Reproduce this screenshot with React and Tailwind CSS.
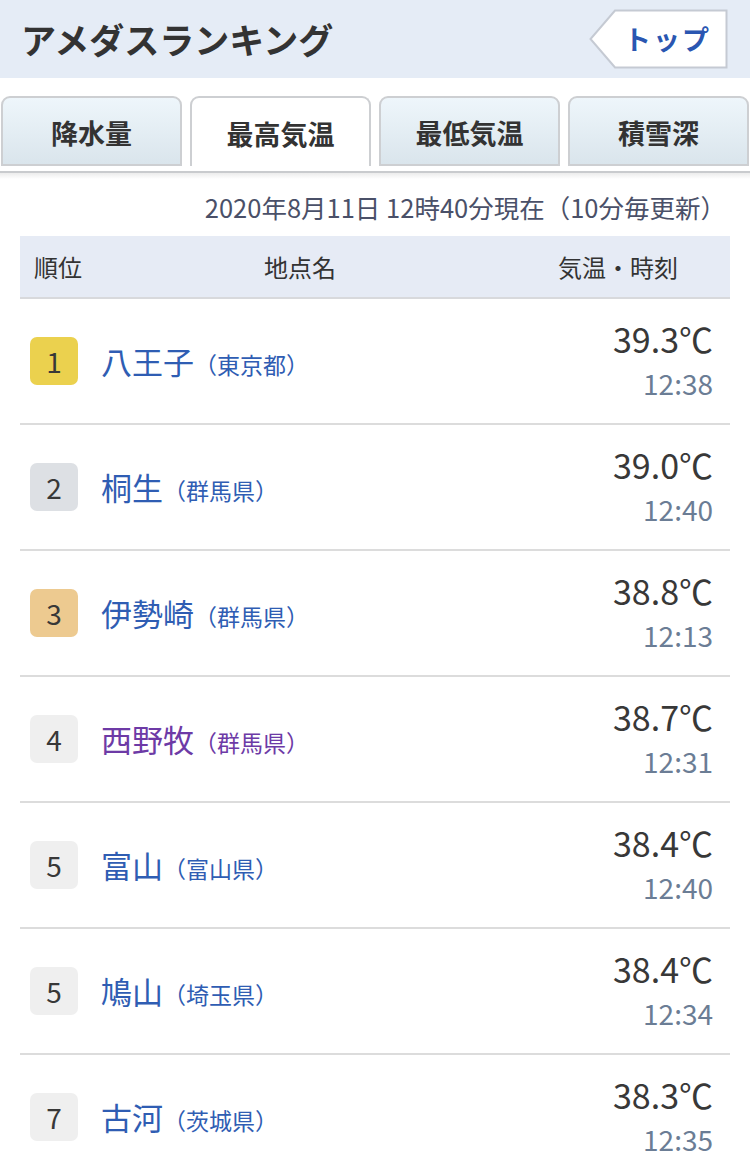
import React from 'react'

const FONT = "font-['Noto_Sans_CJK_JP','Noto_Sans',sans-serif]"

const TABS = [
  { label: '降水量' },
  { label: '最高気温', active: true },
  { label: '最低気温' },
  { label: '積雪深' },
]

const RANKING = [
  { rank: 1, name: '八王子', pref: '東京都', temp: '39.3', time: '12:38' },
  { rank: 2, name: '桐生', pref: '群馬県', temp: '39.0', time: '12:40' },
  { rank: 3, name: '伊勢崎', pref: '群馬県', temp: '38.8', time: '12:13' },
  { rank: 4, name: '西野牧', pref: '群馬県', temp: '38.7', time: '12:31', visited: true },
  { rank: 5, name: '富山', pref: '富山県', temp: '38.4', time: '12:40' },
  { rank: 5, name: '鳩山', pref: '埼玉県', temp: '38.4', time: '12:34' },
  { rank: 7, name: '古河', pref: '茨城県', temp: '38.3', time: '12:35' },
]

const BADGE = {
  1: 'bg-[#ebd14e]',
  2: 'bg-[#dde0e4]',
  3: 'bg-[#edca90]',
}

function TopButton() {
  return (
    <a className="relative flex h-[60px] w-[140px] items-center justify-end pr-[18px]">
      <svg className="absolute inset-0" width="140" height="60" viewBox="0 0 140 60">
        <polygon
          points="26,1.5 137.5,1.5 137.5,58.5 26,58.5 1.5,30"
          fill="#ffffff"
          stroke="#c5cad3"
          strokeWidth="2"
        />
      </svg>
      <span className="relative text-[27px] font-bold tracking-[2px] text-[#2a56b1]">トップ</span>
    </a>
  )
}

function Tab({ label, active }) {
  return (
    <div
      className={`flex h-[70px] items-center justify-center rounded-t-[9px] border-2 border-[#cdcfd2] pt-[4px] text-[27px] font-bold text-[#333] ${
        active ? 'border-b-0 bg-white' : 'bg-gradient-to-b from-[#eef6fb] to-[#dae5ec]'
      }`}
    >
      {label}
    </div>
  )
}

function Row({ item }) {
  const color = item.visited ? 'text-[#6d3aa6]' : 'text-[#2f5db3]'
  return (
    <li className="flex h-[126px] items-center border-b-2 border-[#dcdcdc] pl-[10px] pr-[17px]">
      <span
        className={`flex h-[48px] w-[48px] items-center justify-center rounded-[7px] text-[28px] text-[#383838] ${
          BADGE[item.rank] ?? 'bg-[#efefef]'
        }`}
      >
        {item.rank}
      </span>
      <p className={`ml-[23px] flex-1 ${color}`}>
        <span className="text-[31px]">{item.name}</span>
        <span className="text-[23px]">（{item.pref}）</span>
      </p>
      <div className="text-right">
        <p className="text-[34px] leading-[44px] text-[#383838]">{item.temp}℃</p>
        <p className="text-[28px] leading-[44px] text-[#6b7d95]">{item.time}</p>
      </div>
    </li>
  )
}

export default function App() {
  return (
    <div className={`${FONT} min-h-[1174px] w-[750px] overflow-hidden bg-white`}>
      <header className="flex h-[78px] items-center justify-between bg-[#e5ecf6] pl-[21px] pr-[21px]">
        <h1 className="text-[35px] font-bold text-[#333]">アメダスランキング</h1>
        <TopButton />
      </header>

      <nav className="mt-[18px]">
        <div className="grid grid-cols-4 gap-[8px] px-[1px]">
          {TABS.map(t => (
            <Tab key={t.label} {...t} />
          ))}
        </div>
        <div className="mt-[5px] h-[2px] bg-[#c9cbce]" />
        <div className="h-[6px] bg-gradient-to-b from-[#ececec] to-white" />
      </nav>

      <p className="mt-[12px] pr-[24px] text-right text-[25.5px] leading-[32px] text-[#4a5068]">
        2020年8月11日 12時40分現在（10分毎更新）
      </p>

      <section className="mx-[20px] mt-[13px]">
        <div className="flex h-[63px] items-center border-b-2 border-[#d8d9dc] bg-[#e6ebf5] text-[24px] text-[#333]">
          <span className="w-[180px] pl-[14px]">順位</span>
          <span className="w-[200px] text-center">地点名</span>
          <span className="flex-1 pr-[52px] text-right">気温・時刻</span>
        </div>
        <ul>
          {RANKING.map(item => (
            <Row key={item.name} item={item} />
          ))}
        </ul>
      </section>
    </div>
  )
}
